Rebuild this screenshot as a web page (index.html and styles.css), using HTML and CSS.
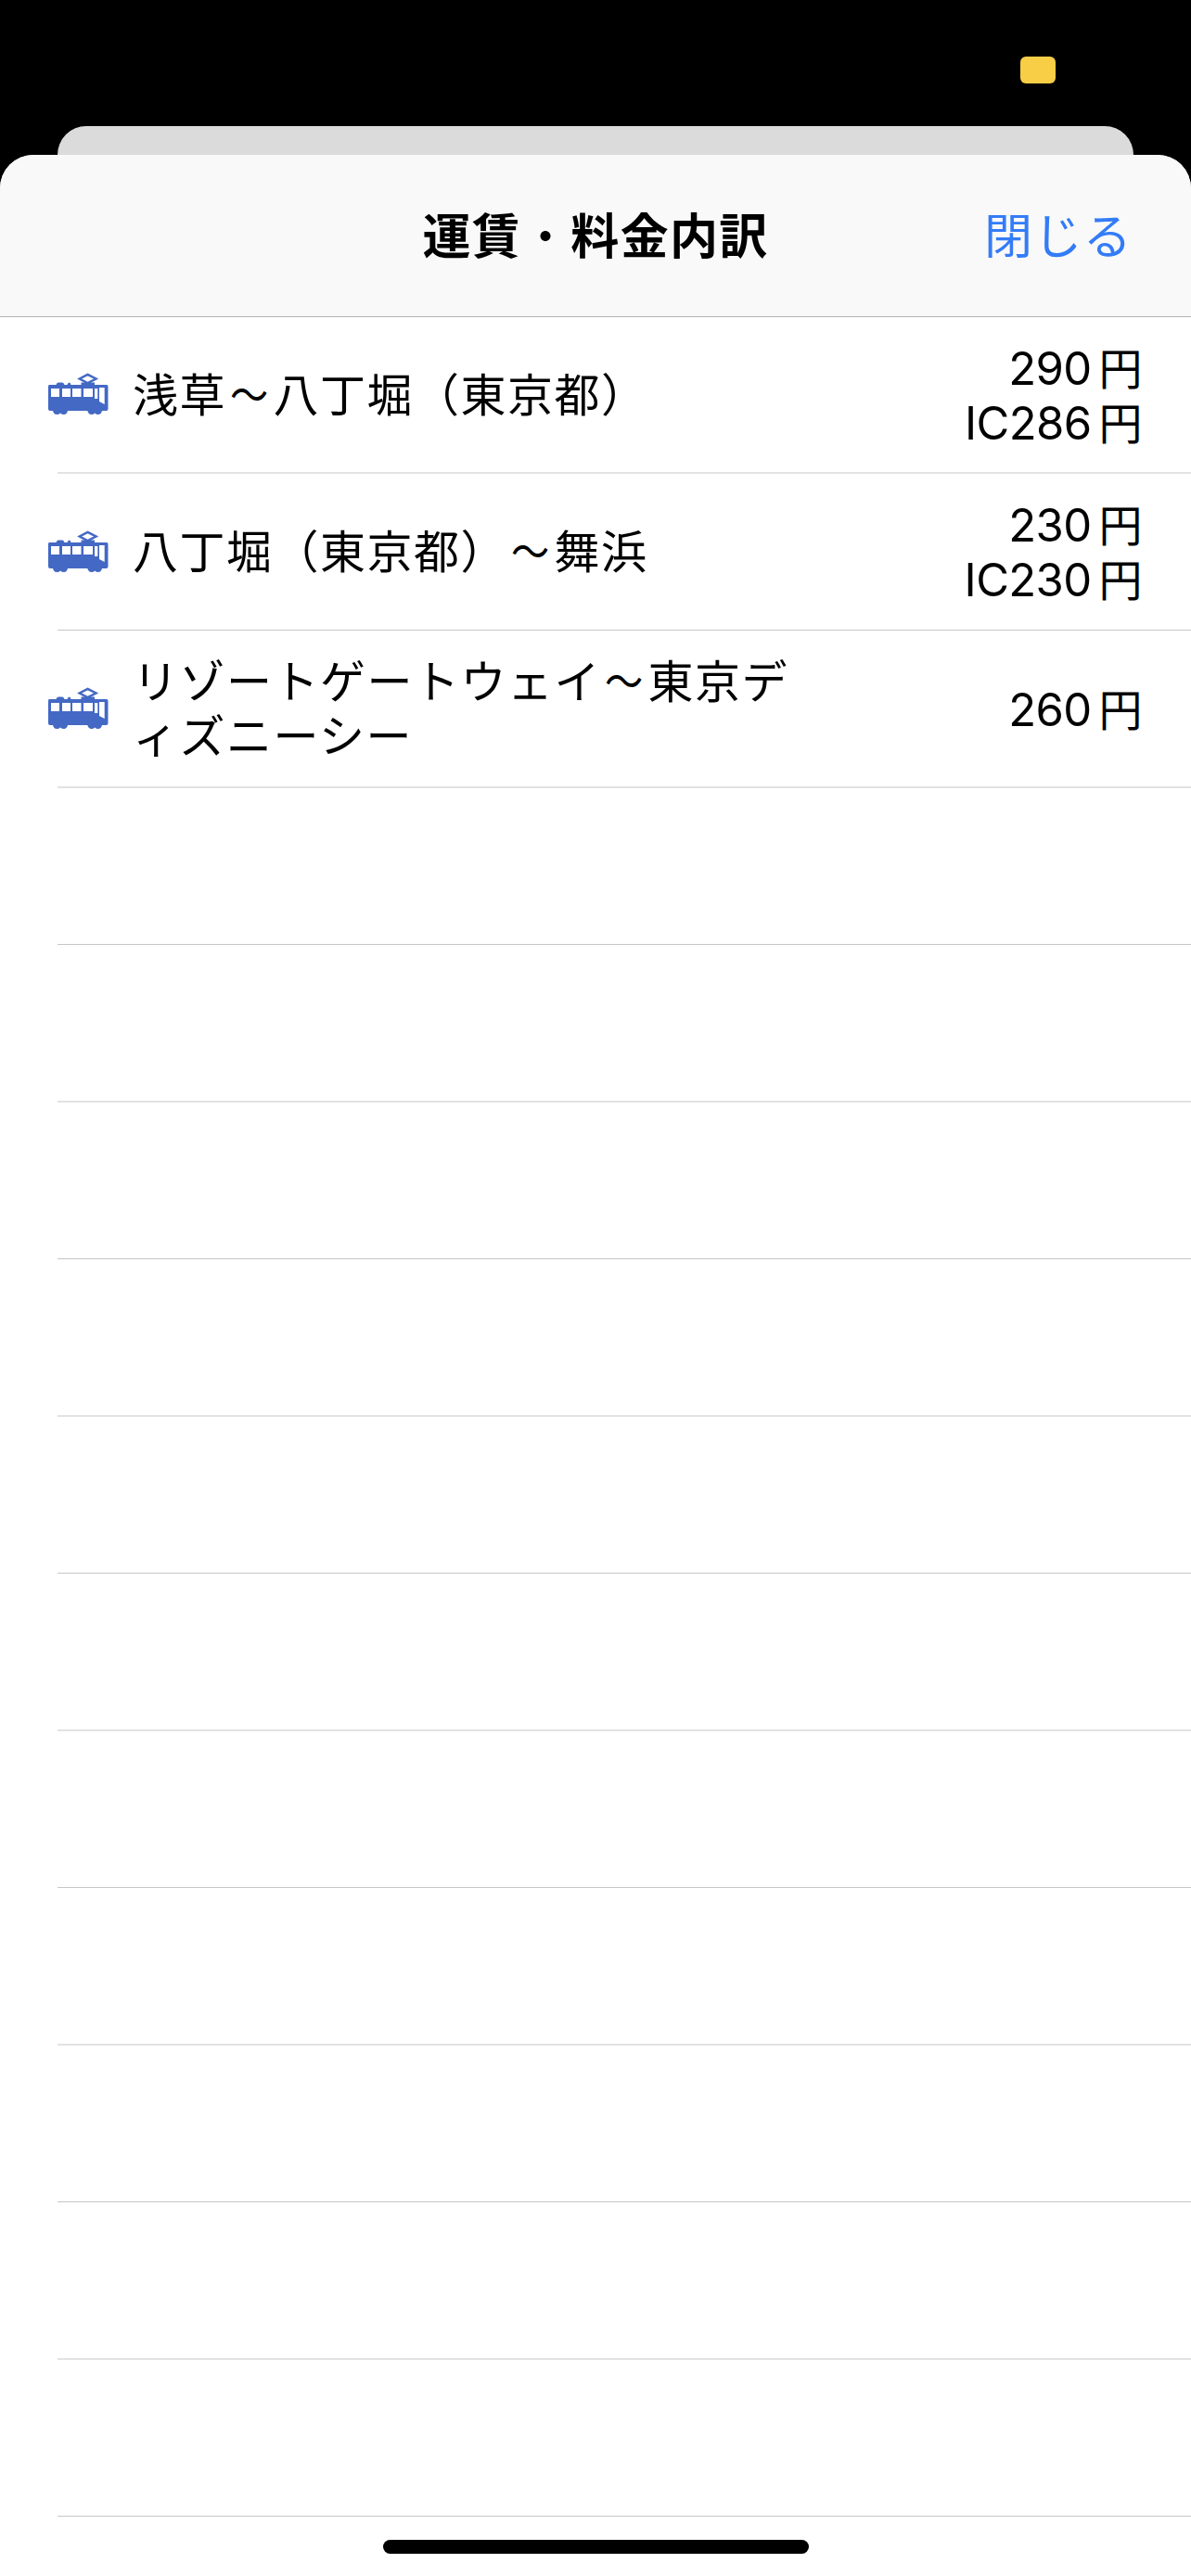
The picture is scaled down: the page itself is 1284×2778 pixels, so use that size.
FILE: index.html
```html
<!DOCTYPE html>
<html lang="ja">
<head>
  <meta charset="UTF-8" />
  <meta name="viewport" content="width=device-width, initial-scale=1.0" />
  <title>運賃・料金内訳</title>
  <link rel="stylesheet" href="styles.css">
</head>
<body>
  <svg width="0" height="0" class="defs">
    <symbol id="train" viewBox="0 0 66 46">
      <path fill-rule="evenodd" d="M2 13H9.500Q10 10.500 12 10.500H16Q18 10.500 18.500 13H21.500Q22 10.500 24 10.500Q25 10.500 25.500 13H36.500V10.500H51V13H64Q65.500 13 65.500 15V39Q65.500 41 63.500 41H59Q58 45 55 45Q52.500 45 51.200 43.500Q50 45 47.500 45Q44.500 45 43.300 41H22Q21 45 18 45Q15.500 45 14 43.500Q13 45 10 45Q7 45 6 41H3Q1 41 1 39V15Q1 13 2 13ZM4 17V26H13V17ZM16 17V26H25V17ZM27 17V26H36.500V17ZM39 17V26H49V17ZM51 17V28H54.300V17ZM56 16V31L61.700 34V16Z" />
      <path class="pantograph" d="M43.500 1.800L52.500 6.500L43.500 11L34.800 6.500Z" />
    </symbol>
  </svg>

  <div class="status-bar"><span class="battery"></span></div>
  <div class="back-card"></div>
  <div class="sheet">
    <header class="nav">
      <h1>運賃<span class="dot">・</span>料金内訳</h1>
      <a class="close">閉じる</a>
    </header>
    <ul class="fares">
      <li>
        <svg class="icon"><use href="#train" /></svg>
        <div class="cell">
          <p class="route">浅草<span class="wave">〜</span>八丁堀（東京都）</p>
          <p class="price">290<span>円</span><br>IC286<span>円</span></p>
        </div>
      </li>
      <li>
        <svg class="icon"><use href="#train" /></svg>
        <div class="cell">
          <p class="route">八丁堀（東京都）<span class="wave">〜</span>舞浜</p>
          <p class="price">230<span>円</span><br>IC230<span>円</span></p>
        </div>
      </li>
      <li>
        <svg class="icon"><use href="#train" /></svg>
        <div class="cell">
          <p class="route">リゾートゲートウェイ<span class="wave">〜</span>東京デ<br>ィズニーシー</p>
          <p class="price">260<span>円</span></p>
        </div>
      </li>
      <li></li>
      <li></li>
      <li></li>
      <li></li>
      <li></li>
      <li></li>
      <li></li>
      <li></li>
      <li></li>
      <li></li>
      <li></li>
    </ul>
    <div class="home-bar"></div>
  </div>
</body>
</html>
```
FILE: styles.css
```css
* { box-sizing: border-box; }
body { margin: 0; height: 2778px; background: #000; color: #000; font-family: Inter, 'Noto Sans CJK JP', sans-serif; display: flex; flex-direction: column; overflow: hidden; }
.defs { display: block; flex: none; }
.status-bar { height: 136px; flex: none; display: flex; justify-content: flex-end; padding: 61px 146px 0 0; }
.battery { width: 38px; height: 29px; border-radius: 6px; background: #f8ce46; }
.back-card { height: 31px; flex: none; margin: 0 62px; border-radius: 31px 31px 0 0; background: #dbdbdb; }
.sheet { flex: 1; display: flex; flex-direction: column; background: #fff; border-radius: 36px 36px 0 0; overflow: hidden; }

.nav { height: 175px; flex: none; display: flex; align-items: center; justify-content: center; position: relative; background: #f9f9f9; border-bottom: 1px solid #b2b2b2; padding-bottom: 5px; font-family: 'Noto Sans CJK JP', sans-serif; }
.nav h1 { margin: 0; font-size: 52px; font-weight: 700; letter-spacing: 1.3px; line-height: 60px; }
.nav .dot { font-weight: 400; }
.close { position: absolute; right: 63px; font-size: 52px; line-height: 60px; letter-spacing: 1.3px; color: #347cf7; }

.fares { list-style: none; margin: 0; padding: 0; }
.fares li { height: 169px; display: flex; align-items: center; padding-left: 51px; background: linear-gradient(#c6c6c8, #c6c6c8) 62px 100% / 100% 1px no-repeat; }
.fares li:nth-child(odd) { height: 170px; background: linear-gradient(#e2e2e3, #e2e2e3) 62px 100% / 100% 2px no-repeat; }
.fares li:first-child { height: 169px; }
.icon { width: 66px; height: 46px; flex: none; align-self: flex-start; fill: #4469c4; margin: 60px 26px 0 0; }
li + li .icon { margin-top: 61px; }
.pantograph { fill: none; stroke: #4469c4; stroke-width: 2.5; }
.cell { flex: 1; display: flex; align-items: center; justify-content: space-between; padding-right: 53px; }
.cell p { margin: 0; line-height: 59px; }
.cell .route { font-family: 'Noto Sans CJK JP', sans-serif; font-size: 49px; letter-spacing: 1.5px; padding-bottom: 8px; }
.wave { display: inline-block; transform: scaleX(.84); }
.cell .price { font-size: 49px; text-align: right; letter-spacing: -0.6px; }
.price span { font-family: 'Noto Sans CJK JP', sans-serif; font-size: 47px; margin-left: 8px; line-height: 1; }

.home-bar { width: 459px; height: 15px; border-radius: 8px; background: #000; margin: 25px auto 0; }
```
